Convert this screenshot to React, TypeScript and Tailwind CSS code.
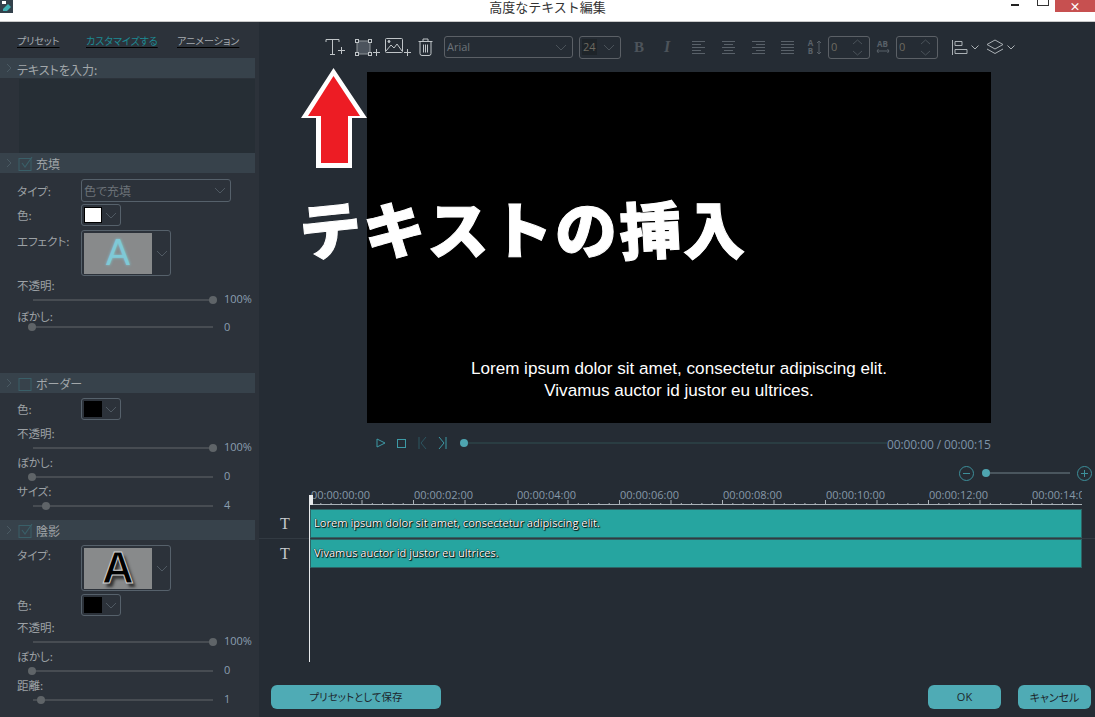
import React from 'react'

const ruler = ['00:00:00:00', '00:00:02:00', '00:00:04:00', '00:00:06:00', '00:00:08:00', '00:00:10:00', '00:00:12:00', '00:00:14:00']
const bigText = [
  { ch: 'テ', cls: '-rotate-6' },
  { ch: 'キ', cls: '-rotate-6' },
  { ch: 'ス', cls: '' },
  { ch: 'ト', cls: '' },
  { ch: 'の', cls: '' },
  { ch: '挿', cls: '-rotate-3' },
  { ch: '入', cls: '' },
]

function Chevron({ className }: { className?: string }) {
  return (
    <svg width="12" height="7" viewBox="0 0 12 7" className={className} fill="none" stroke="currentColor" strokeWidth="1">
      <path d="M1 1l5 5 5-5" />
    </svg>
  )
}

function SmallChevron({ className }: { className?: string }) {
  return (
    <svg width="8" height="5" viewBox="0 0 8 5" className={className} fill="none" stroke="#aab0b4" strokeWidth="1">
      <path d="M.5 .5L4 4 7.500 .5" />
    </svg>
  )
}

function SectionHeader({ label, check }: { label: string; check?: 'on' | 'off' }) {
  return (
    <div className="flex h-5 w-[255px] items-center bg-[#37424b]">
      <svg width="6" height="10" viewBox="0 0 6 10" className="ml-[6px] mr-[6px] text-[#4a5a63]" fill="none" stroke="currentColor">
        <path d="M1 1l4 4-4 4" />
      </svg>
      {check && (
        <svg width="15" height="15" viewBox="0 0 15 15" className="mr-[3px]" fill="none">
          <rect x="1" y="2.500" width="12" height="12" stroke="#3a5f68" strokeWidth="1" />
          {check === 'on' && <path d="M4 7l3 4 7-10" stroke="#3a5f68" strokeWidth="1.200" />}
        </svg>
      )}
      <span className={`text-[12px] text-[#a2a7aa] ${check ? 'mt-[2px]' : 'ml-[-1px] mt-[4px]'}`}>{label}</span>
    </div>
  )
}

function Label({ children }: { children: React.ReactNode }) {
  return <span className="block w-[81px] shrink-0 pl-[17px] text-[11.500px] leading-[14px] text-[#9ca1a5]">{children}</span>
}

function ColorRow({ label, color, className }: { label: string; color: string; className?: string }) {
  return (
    <div className={`flex items-center ${className ?? ''}`}>
      <Label>{label}</Label>
      <div className="flex h-[22px] w-10 items-center gap-[3px] rounded-[3px] border border-[#56616b] pl-[2px]">
        <div className={`h-4 w-[18px] border border-black ${color}`} />
        <Chevron className="text-[#4f5962]" />
      </div>
    </div>
  )
}

function SliderBlock({ label, value, knob, rowClass, className }: { label: string; value: string; knob: string; rowClass: string; className?: string }) {
  return (
    <div className={className}>
      <div className="flex h-[14px] items-center">
        <Label>{label}</Label>
      </div>
      <div className={`flex items-center ${rowClass}`}>
        <div className="relative ml-[33px] h-[2px] w-[180px] bg-[#474c52]">
          <div className={`absolute top-[-3px] size-2 rounded-full bg-[#5f6468] ${knob}`} />
        </div>
        <span className="ml-[11px] font-['Open_Sans',sans-serif] text-[11px] text-[#8b9eb0]">{value}</span>
      </div>
    </div>
  )
}

function LeftPanel() {
  return (
    <div className="flex h-full w-[259px] shrink-0 flex-col bg-[#2c323a] font-['Noto_Sans_CJK_JP',sans-serif] [font-feature-settings:'palt']">
      <div className="flex h-9 items-center text-[10px] underline underline-offset-2">
        <span className="ml-[17px] w-[69px] text-[#a5aab0]">プリセット</span>
        <span className="w-[91px] text-[#1c8a93]">カスタマイズする</span>
        <span className="text-[#a5aab0]">アニメーション</span>
      </div>

      <SectionHeader label="テキストを入力:" />
      <div className="ml-[19px] mt-px h-[74px] w-[236px] bg-[#262e35]" />

      <SectionHeader label="充填" check="on" />
      <div className="h-[200px] pt-[6px]">
        <div className="flex items-center">
          <Label>タイプ:</Label>
          <div className="flex h-[23px] w-[150px] items-center justify-between rounded-[3px] border border-[#56616b] pl-[2px] pr-[4px] text-[12px] text-[#6d7379]">
            色で充填
            <Chevron className="text-[#4f5962]" />
          </div>
        </div>
        <ColorRow label="色:" color="bg-white" className="mt-[2px]" />
        <div className="mt-1 flex items-start">
          <div className="pt-[4px]">
            <Label>エフェクト:</Label>
          </div>
          <div className="flex h-[46px] w-[90px] items-center rounded-[3px] border border-[#56616b] pl-[2px]">
            <div className="flex h-[41px] w-[68px] items-center justify-center bg-[#888a8b] font-['Liberation_Sans',sans-serif] text-[36px] text-[#7fc9d6] [text-shadow:0_0_3px_#7fc9d6]">
              A
            </div>
            <Chevron className="ml-[4px] text-[#4f5962]" />
          </div>
        </div>
        <SliderBlock label="不透明:" value="100%" knob="left-[176px]" rowClass="h-[15px]" className="mt-[2px]" />
        <SliderBlock label="ぼかし:" value="0" knob="left-[-5px]" rowClass="h-[8px]" className="mt-[2px]" />
      </div>

      <SectionHeader label="ボーダー" check="off" />
      <div className="h-[127px] pt-[5px]">
        <ColorRow label="色:" color="bg-black" />
        <SliderBlock label="不透明:" value="100%" knob="left-[176px]" rowClass="h-[15px]" className="mt-[6px]" />
        <SliderBlock label="ぼかし:" value="0" knob="left-[-5px]" rowClass="h-[15px]" />
        <SliderBlock label="サイズ:" value="4" knob="left-[9px]" rowClass="h-[15px]" />
      </div>

      <SectionHeader label="陰影" check="on" />
      <div className="pt-[5px]">
        <div className="flex items-start">
          <div className="pt-[3px]">
            <Label>タイプ:</Label>
          </div>
          <div className="flex h-[46px] w-[90px] items-center rounded-[3px] border border-[#56616b] pl-[2px]">
            <div className="flex h-[41px] w-[68px] items-center justify-center bg-[#888a8b] font-['Liberation_Sans',sans-serif] text-[44px] font-bold text-black [-webkit-text-stroke:1px_#d0d0d0] [text-shadow:3px_4px_3px_#333]">
              A
            </div>
            <Chevron className="ml-[4px] text-[#4f5962]" />
          </div>
        </div>
        <ColorRow label="色:" color="bg-black" className="mt-[3px]" />
        <SliderBlock label="不透明:" value="100%" knob="left-[176px]" rowClass="h-[15px]" className="mt-[4px]" />
        <SliderBlock label="ぼかし:" value="0" knob="left-[-5px]" rowClass="h-[15px]" />
        <SliderBlock label="距離:" value="1" knob="left-[4px]" rowClass="h-[15px]" />
      </div>
    </div>
  )
}

function TextPlusIcon() {
  return (
    <svg width="20" height="18" viewBox="0 0 20 18" fill="none" stroke="#c0c5c8" strokeWidth="1">
      <path d="M1 4V1.500h13V4M7.500 1.500V16M5 16.500h5M13 12.500h7M16.500 9v7" />
    </svg>
  )
}

function ShapePlusIcon() {
  return (
    <svg width="26" height="18" viewBox="0 0 26 18" fill="none" stroke="#c0c5c8" strokeWidth="1">
      <rect x="3" y="3" width="13" height="13" fill="#4c545d" stroke="#8f959a" />
      <rect x="1.500" y="1.500" width="3" height="3" fill="#252c34" />
      <rect x="14.500" y="1.500" width="3" height="3" fill="#252c34" />
      <rect x="1.500" y="14.500" width="3" height="3" fill="#252c34" />
      <rect x="14.500" y="14.500" width="3" height="3" fill="#252c34" />
      <path d="M19 14.500h7M22.500 11v7" />
    </svg>
  )
}

function ImagePlusIcon() {
  return (
    <svg width="26" height="18" viewBox="0 0 26 18" fill="none" stroke="#c0c5c8" strokeWidth="1">
      <rect x="0.500" y="0.500" width="17" height="14" rx="1" />
      <circle cx="4" cy="3.500" r="1" fill="#c0c5c8" />
      <path d="M1 13l5-6 3 3 3-4 5 7" />
      <path d="M19 14.500h7M22.500 11v7" />
    </svg>
  )
}

function TrashIcon() {
  return (
    <svg width="15" height="18" viewBox="0 0 15 18" fill="none" stroke="#c0c5c8" strokeWidth="1">
      <path d="M0.500 3.500h14M5 3.500V1h5v2.500M2 3.500v12a2 2 0 0 0 2 2h7a2 2 0 0 0 2-2v-12M5.500 6.500v8M7.500 6.500v8M9.500 6.500v8" />
    </svg>
  )
}

function AlignIcon({ kind }: { kind: 'left' | 'center' | 'right' | 'full' }) {
  const lines = {
    left: ['M0 .5h13', 'M0 3.500h9', 'M0 6.500h13', 'M0 9.500h9', 'M0 12.500h13'],
    center: ['M0 .5h13', 'M2 3.500h9', 'M0 6.500h13', 'M2 9.500h9', 'M0 12.500h13'],
    right: ['M0 .5h13', 'M4 3.500h9', 'M0 6.500h13', 'M4 9.500h9', 'M0 12.500h13'],
    full: ['M0 .5h13', 'M0 3.500h13', 'M0 6.500h13', 'M0 9.500h13', 'M0 12.500h13'],
  }[kind]
  return (
    <svg width="13" height="13" viewBox="0 0 13 13" stroke="#596169" fill="none">
      <path d={lines.join('')} />
    </svg>
  )
}

function Stepper({ className }: { className?: string }) {
  return (
    <div className={`flex h-[23px] w-[42px] items-center justify-between rounded-[3px] border border-[#5b6066] pl-[2px] pr-[6px] ${className ?? ''}`}>
      <span className="text-[11px] text-[#6d6a60]">0</span>
      <svg width="11" height="17" viewBox="0 0 11 17" fill="none" stroke="#4a5259">
        <path d="M1 5l4.500-4L10 5M1 12l4.500 4 4.500-4" />
      </svg>
    </div>
  )
}

function Toolbar() {
  return (
    <div className="flex h-[50px] items-center font-['Open_Sans',sans-serif]">
      <div className="ml-[66px]"><TextPlusIcon /></div>
      <div className="ml-[9px]"><ShapePlusIcon /></div>
      <div className="ml-[5px]"><ImagePlusIcon /></div>
      <div className="ml-[7px]"><TrashIcon /></div>
      <div className="ml-[11px] flex h-[22px] w-[129px] items-center justify-between rounded-[3px] border border-[#5b6066] pl-[2px] pr-[5px] text-[11px] text-[#6d7379]">
        Arial
        <Chevron className="text-[#4a5259]" />
      </div>
      <div className="ml-[6px] flex h-[23px] w-[42px] items-center justify-between rounded-[3px] border border-[#5b6066] pl-[2px] pr-[5px] text-[11px] text-[#6d6a60]">
        <span className="bg-[#1e2429] px-px">24</span>
        <Chevron className="text-[#4a5259]" />
      </div>
      <span className="ml-[13px] w-[11px] font-['Liberation_Serif',serif] text-[15px] font-bold text-[#4d545b]">B</span>
      <span className="ml-[19px] w-[7px] font-['Liberation_Serif',serif] text-[16px] font-bold italic text-[#4d545b]">I</span>
      <div className="ml-[21px]"><AlignIcon kind="left" /></div>
      <div className="ml-[17px]"><AlignIcon kind="center" /></div>
      <div className="ml-[17px]"><AlignIcon kind="right" /></div>
      <div className="ml-[16px]"><AlignIcon kind="full" /></div>
      <div className="ml-[13px] flex w-[15px] items-center">
        <span className="flex w-[7px] flex-col items-center text-[8px] font-bold leading-[8px] text-[#596169]">
          <span>A</span>
          <span>B</span>
        </span>
        <svg width="6" height="15" viewBox="0 0 6 15" fill="none" stroke="#596169" className="ml-[2px]">
          <path d="M1 3l2-2 2 2M3 1v13M1 12l2 2 2-2" />
        </svg>
      </div>
      <Stepper className="ml-[6px]" />
      <div className="ml-[6px] flex w-[13px] flex-col items-center">
        <span className="text-[8px] font-bold leading-[8px] text-[#596169]">AB</span>
        <svg width="14" height="6" viewBox="0 0 14 6" fill="none" stroke="#596169">
          <path d="M2.500 1L1 3l1.500 2M1 3h12M11.500 1L13 3l-1.500 2" />
        </svg>
      </div>
      <Stepper className="ml-[7px]" />
      <svg width="16" height="15" viewBox="0 0 16 15" fill="none" stroke="#aab0b4" className="ml-[14px]">
        <path d="M.5 0v15M3 1.500h7v4H3zM3 9.500h12v4H3z" />
      </svg>
      <SmallChevron className="ml-[3px]" />
      <svg width="18" height="16" viewBox="0 0 18 16" fill="none" stroke="#aab0b4" className="ml-[7px]">
        <path d="M9 1l8 4.500L9 10 1 5.500zM1 10l8 4.500L17 10" />
      </svg>
      <SmallChevron className="ml-[3px]" />
    </div>
  )
}

function Transport() {
  return (
    <div className="mt-2 flex h-8 items-center pb-2">
      <svg width="10" height="10" viewBox="0 0 10 10" fill="none" stroke="#3d9aa6" className="ml-[117px]">
        <path d="M1 1l8 4-8 4z" />
      </svg>
      <div className="ml-[11px] size-[9px] border border-[#3d9aa6]" />
      <svg width="9" height="12" viewBox="0 0 9 12" fill="none" stroke="#2d5661" className="ml-[12px]">
        <path d="M1 0v12M8 0L3 6l5 6" />
      </svg>
      <svg width="9" height="12" viewBox="0 0 9 12" fill="none" stroke="#3d9aa6" className="ml-[11px]">
        <path d="M8 0v12M1 0l5 6-5 6" />
      </svg>
      <div className="ml-[13px] size-2 shrink-0 rounded-full bg-[#4ea5b0]" />
      <div className="h-[2px] w-[419px] bg-[#2a3d42]" />
      <span className="mt-[3px] whitespace-nowrap font-['Open_Sans',sans-serif] text-[12px] tracking-[-0.1px] text-[#7d93a8]">00:00:00 / 00:00:15</span>
    </div>
  )
}

function ZoomRow() {
  return (
    <div className="mt-px flex h-[18px] items-center justify-end pr-[3px]">
      <svg width="15" height="15" viewBox="0 0 15 15" fill="none" stroke="#3d8f9a">
        <circle cx="7.500" cy="7.500" r="7" />
        <path d="M4 7.500h7" />
      </svg>
      <div className="ml-2 size-2 shrink-0 rounded-full bg-[#4ea5b0]" />
      <div className="h-[2px] w-[80px] bg-[#4a565e]" />
      <svg width="15" height="15" viewBox="0 0 15 15" fill="none" stroke="#3d8f9a" className="ml-[7px]">
        <circle cx="7.500" cy="7.500" r="7" />
        <path d="M4 7.500h7M7.500 4v7" />
      </svg>
    </div>
  )
}

function RulerTicks() {
  const ticks = []
  for (let i = 0; i < 76; i++) {
    const x = i * 10.3 + 0.5
    const tall = i % 5 === 0
    ticks.push(<path key={i} d={`M${x} ${tall ? 11 : 14}V16`} />)
  }
  return (
    <svg width="772" height="16" viewBox="0 0 772 16" fill="none" stroke="#aab2b8" className="absolute left-0 top-0">
      {ticks}
      <path d="M0 15.500h772" />
    </svg>
  )
}

function Timeline() {
  const trackBar = "flex h-[29px] w-[772px] items-center border border-[#2e6465] bg-[#26a5a0] pl-[3px] text-[11.100px] text-white [text-shadow:0_0_1px_#000,0_0_1px_#000,1px_1px_1px_#000]"
  const trackIcon = "flex w-[51px] items-center justify-center pl-[1px] font-['Liberation_Serif',serif] text-[16px] text-[#c5c9cc]"
  return (
    <div className="relative mt-[7px] font-['Open_Sans',sans-serif]">
      <div className="ml-[51px] flex h-[20px] w-[772px]">
        <div className="relative h-[17px] w-full overflow-hidden">
          <RulerTicks />
          <div className="flex">
            {ruler.map((t) => (
              <span key={t} className="w-[103px] shrink-0 pl-[1px] text-[11px] leading-[12px] text-[#8698a8]">{t}</span>
            ))}
          </div>
        </div>
      </div>
      <div className="flex h-[30px] border-b border-[#323a42]">
        <span className={trackIcon}>T</span>
        <div className={trackBar}>Lorem ipsum dolor sit amet, consectetur adipiscing elit.</div>
      </div>
      <div className="flex h-[30px]">
        <span className={trackIcon}>T</span>
        <div className={trackBar}>Vivamus auctor id justor eu ultrices.</div>
      </div>
      <div className="absolute left-[50px] top-[6px] h-[167px] w-px bg-[#e8eaec]" />
      <div className="absolute left-[50px] top-[6px] h-[10px] w-1 bg-[#e8eaec]" />
    </div>
  )
}

function RightPanel() {
  return (
    <div className="flex h-full min-w-0 flex-1 flex-col bg-[#252c34]">
      <Toolbar />
      <div className="ml-[108px] flex h-[351px] w-[624px] flex-col items-center justify-end bg-black pb-[21px] font-['Liberation_Sans',sans-serif] text-[17.100px] leading-[22px] text-white">
        <div>Lorem ipsum dolor sit amet, consectetur adipiscing elit.</div>
        <div>Vivamus auctor id justor eu ultrices.</div>
      </div>
      <Transport />
      <ZoomRow />
      <Timeline />
      <div className="mt-auto flex items-center pb-2 pl-3 pr-1 font-['Noto_Sans_CJK_JP',sans-serif] text-[10.500px] text-[#1d272d] [font-feature-settings:'palt']">
        <button className="h-6 w-[170px] rounded-md bg-[#4fabb5]">プリセットとして保存</button>
        <button className="ml-auto h-6 w-[73px] rounded-md bg-[#4fabb5] font-['Open_Sans',sans-serif] text-[11px]">OK</button>
        <button className="ml-[17px] h-6 w-[73px] rounded-md bg-[#4fabb5] text-[11px]">キャンセル</button>
      </div>
    </div>
  )
}

export default function App() {
  return (
    <div className="relative flex h-[717px] w-[1095px] flex-col overflow-hidden">
      {/* title bar */}
      <div className="relative flex h-[22px] shrink-0 justify-center overflow-hidden border-b border-[#c9c9c9] bg-white font-['Noto_Sans_CJK_JP',sans-serif] text-[13px] leading-[15px] text-[#333]">
        <svg width="13" height="13" viewBox="0 0 13 13" className="absolute left-0 top-0">
          <rect width="13" height="13" fill="#33414b" />
          <path d="M3 9l5-5 3 3-4 4H3z" fill="#3fb0b4" />
          <rect x="2" y="1" width="4" height="3" fill="#fff" />
        </svg>
        <span className="-mt-px">高度なテキスト編集</span>
        <div className="absolute right-[76px] top-[4px] h-[2px] w-2 bg-[#222]" />
        <div className="absolute right-[46px] top-[-6px] h-[12px] w-[12px] border border-[#333]" />
        <div className="absolute right-0 top-0 flex h-3 w-10 items-center justify-center bg-[#c75050] text-[11px] font-bold leading-none text-white">×</div>
      </div>
      <div className="flex min-h-0 flex-1">
        <LeftPanel />
        <RightPanel />
      </div>

      {/* annotation arrow + caption pasted over the screenshot */}
      <svg width="70" height="104" viewBox="0 0 70 104" className="absolute left-[299px] top-[66px]">
        <path d="M34.500 2L68 52H53v50H17V52H2z" fill="#fff" />
        <path d="M34.500 10L61 50H49v47H22V50H9z" fill="#ed1c24" />
      </svg>
      <div className="absolute left-[298px] top-[183px] flex font-['Noto_Sans_CJK_JP',sans-serif] text-[62px] font-black leading-[88px] text-white [-webkit-text-stroke:1px_white]">
        {bigText.map((c) => (
          <span key={c.ch} className={`block w-[64px] text-center ${c.cls}`}>{c.ch}</span>
        ))}
      </div>
    </div>
  )
}
